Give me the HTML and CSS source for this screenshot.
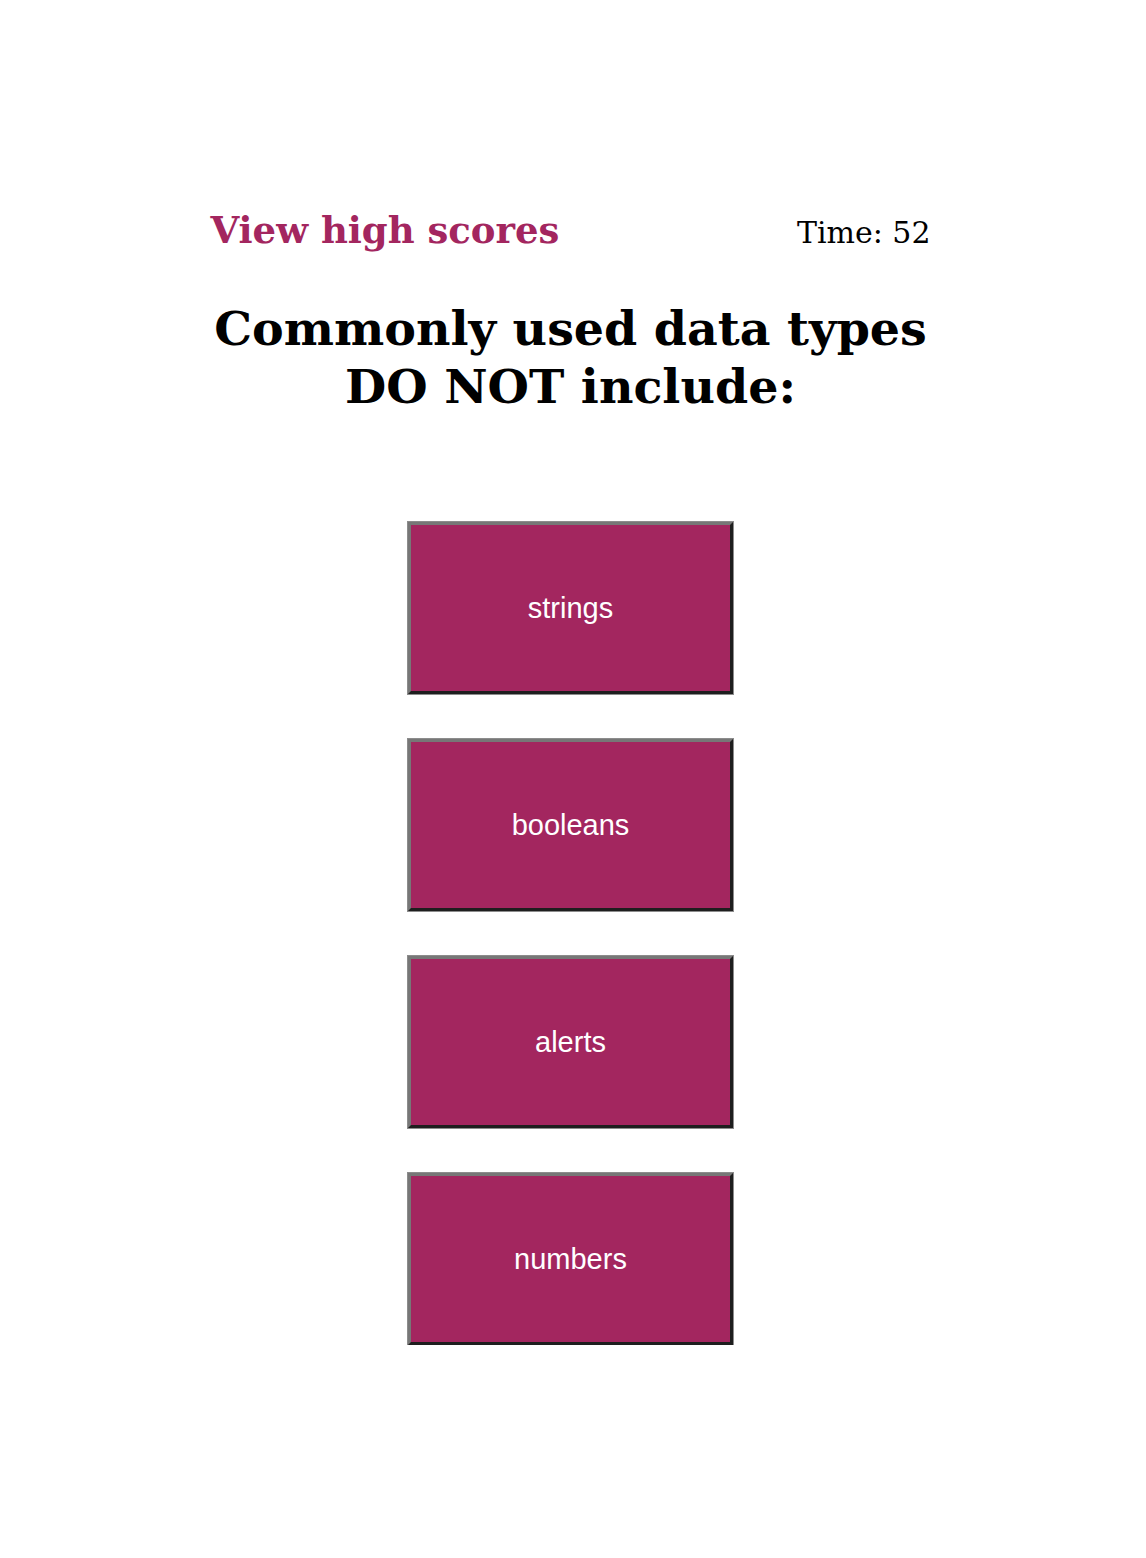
FILE: index.html
```html
<!DOCTYPE html>
<html lang="en">
<head>
<meta charset="utf-8">
<title>Code Quiz</title>
<link rel="stylesheet" href="styles.css">
</head>
<body>
<main class="quiz">
  <header class="top">
    <a class="scores-link" href="#">View high scores</a>
    <div class="timer">Time: 52</div>
  </header>
  <h1 class="question">Commonly used data types<br>DO NOT include:</h1>
  <div class="answers">
    <button class="answer">strings</button>
    <button class="answer">booleans</button>
    <button class="answer">alerts</button>
    <button class="answer">numbers</button>
  </div>
</main>
</body>
</html>
```

FILE: styles.css
```css
html, body {
  margin: 0;
  padding: 0;
  background: #ffffff;
}

body {
  padding-right: 5px;
  font-family: "DejaVu Serif", "Liberation Serif", serif;
  color: #000;
}

.quiz {
  width: 720px;
  margin: 0 auto;
  padding-top: 208px;
}

.top {
  display: flex;
  justify-content: space-between;
  align-items: baseline;
}

.scores-link {
  font-size: 37px;
  font-weight: bold;
  color: #a3265f;
  text-decoration: none;
  line-height: 44px;
}

.timer {
  font-size: 30px;
  line-height: 40px;
}

.question {
  margin: 46px 0 0;
  font-size: 47.5px;
  line-height: 58px;
  font-weight: bold;
  text-align: center;
  white-space: nowrap;
}

.answers {
  display: flex;
  flex-direction: column;
  align-items: center;
  gap: 45px;
  margin-top: 107px;
}

.answer {
  width: 325px;
  height: 172px;
  box-sizing: border-box;
  background: #a3265f;
  color: #ffffff;
  font-family: "Liberation Sans", Arial, sans-serif;
  font-size: 29px;
  border: 3px solid;
  border-color: #777777 #1e1e1e #1e1e1e #777777;
  box-shadow: 0 0 0 1px #8c8c8c;
  padding: 0;
  cursor: pointer;
}
```
